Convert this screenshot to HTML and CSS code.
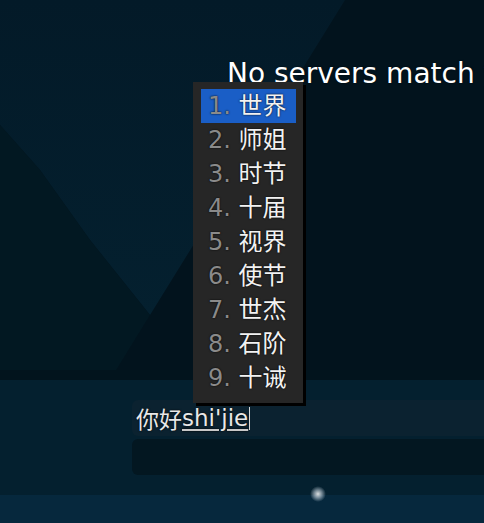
FILE: index.html
```html
<!DOCTYPE html>
<html lang="zh">
<head>
  <meta charset="UTF-8" />
  <title>Server Browser</title>
  <link rel="stylesheet" href="styles.css">
</head>
<body>
  <svg class="backdrop" width="484" height="380" viewBox="0 0 484 380">
    <defs>
      <linearGradient id="wedge" x1="0" y1="0" x2="0" y2="1">
        <stop offset="0" stop-color="#031a28" />
        <stop offset="1" stop-color="#04202f" />
      </linearGradient>
    </defs>
    <rect width="484" height="380" fill="#02131d" />
    <polygon points="0,0 345,0 150,315 90,240 40,170 0,125" fill="url(#wedge)" />
    <polygon points="0,125 40,170 90,240 150,315 110,380 0,380" fill="#021822" />
    <rect y="370" width="484" height="10" fill="#02141d" />
  </svg>

  <main class="browser">
    <p class="empty-note">No servers match your filters</p>

    <section class="bottom-panel">
      <div class="entry">
        <span class="committed">你好</span><span class="preedit">shi'jie</span><span class="caret"></span>
      </div>
      <div class="search"></div>
    </section>

    <footer class="statusbar">
      <span class="glow"></span>
    </footer>
  </main>

  <!-- input method candidate window -->
  <div class="candidates">
    <ol>
      <li class="active"><span class="num">1.</span> 世界</li>
      <li><span class="num">2.</span> 师姐</li>
      <li><span class="num">3.</span> 时节</li>
      <li><span class="num">4.</span> 十届</li>
      <li><span class="num">5.</span> 视界</li>
      <li><span class="num">6.</span> 使节</li>
      <li><span class="num">7.</span> 世杰</li>
      <li><span class="num">8.</span> 石阶</li>
      <li><span class="num">9.</span> 十诫</li>
    </ol>
  </div>
</body>
</html>
```

FILE: styles.css
```css
body {
  margin: 0;
  width: 484px;
  height: 523px;
  overflow: hidden;
  position: relative;
  background: #02131d;
  font-family: 'DejaVu Sans', 'Noto Sans CJK SC', sans-serif;
  color: #ffffff;
}

.backdrop {
  position: absolute;
  left: 0;
  top: 0;
}

.browser {
  position: relative;
  height: 523px;
  display: flex;
  flex-direction: column;
}

.empty-note {
  margin: 0;
  padding: 57px 0 0 227px;
  font-size: 28px;
  line-height: 34px;
  white-space: nowrap;
  overflow: hidden;
  text-shadow: 0 0 2px rgba(0, 0, 0, 0.6);
}

/* lower panel with the text fields */
.bottom-panel {
  margin-top: auto;
  height: 115px;
  box-sizing: border-box;
  padding: 20px 0 0 132px;
  background: #04202f;
}
.entry {
  height: 36px;
  padding-left: 4px;
  background: #0b2230;
  border-radius: 6px 0 0 6px;
  display: flex;
  align-items: center;
  font-size: 23px;
  color: #e8e8e8;
  text-shadow: 0 0 2px #000;
}
.preedit {
  text-decoration: underline;
  text-decoration-color: #c8c8c8;
  text-underline-offset: 3px;
}
.caret {
  display: inline-block;
  width: 1px;
  height: 23px;
  margin-left: 1px;
  background: #d8d8d8;
}
.search {
  height: 36px;
  margin-top: 3px;
  background: #031721;
  border-radius: 6px 0 0 6px;
}

.statusbar {
  position: relative;
  height: 28px;
  background: #06283d;
}
.glow {
  position: absolute;
  left: 310px;
  top: -9px;
  width: 16px;
  height: 16px;
  border-radius: 50%;
  background: radial-gradient(circle, rgba(255, 255, 255, 0.85) 0%, rgba(220, 230, 240, 0.5) 35%, rgba(200, 220, 240, 0) 70%);
}

/* candidate popup */
.candidates {
  position: absolute;
  left: 193px;
  top: 82px;
  width: 110px;
  box-sizing: border-box;
  padding: 7px 7px 8px 8px;
  background: #262626;
  box-shadow: 3px 3px 0 #000;
}
.candidates ol {
  list-style: none;
  margin: 0;
  padding: 0;
}
.candidates li {
  height: 34px;
  line-height: 34px;
  padding-left: 7px;
  font-size: 24px;
  white-space: nowrap;
  color: #f2f2f2;
  text-shadow: 0 0 2px #000;
}
.candidates li.active {
  background: #1a5ec6;
}
.num {
  color: #8a8a8a;
}
```
